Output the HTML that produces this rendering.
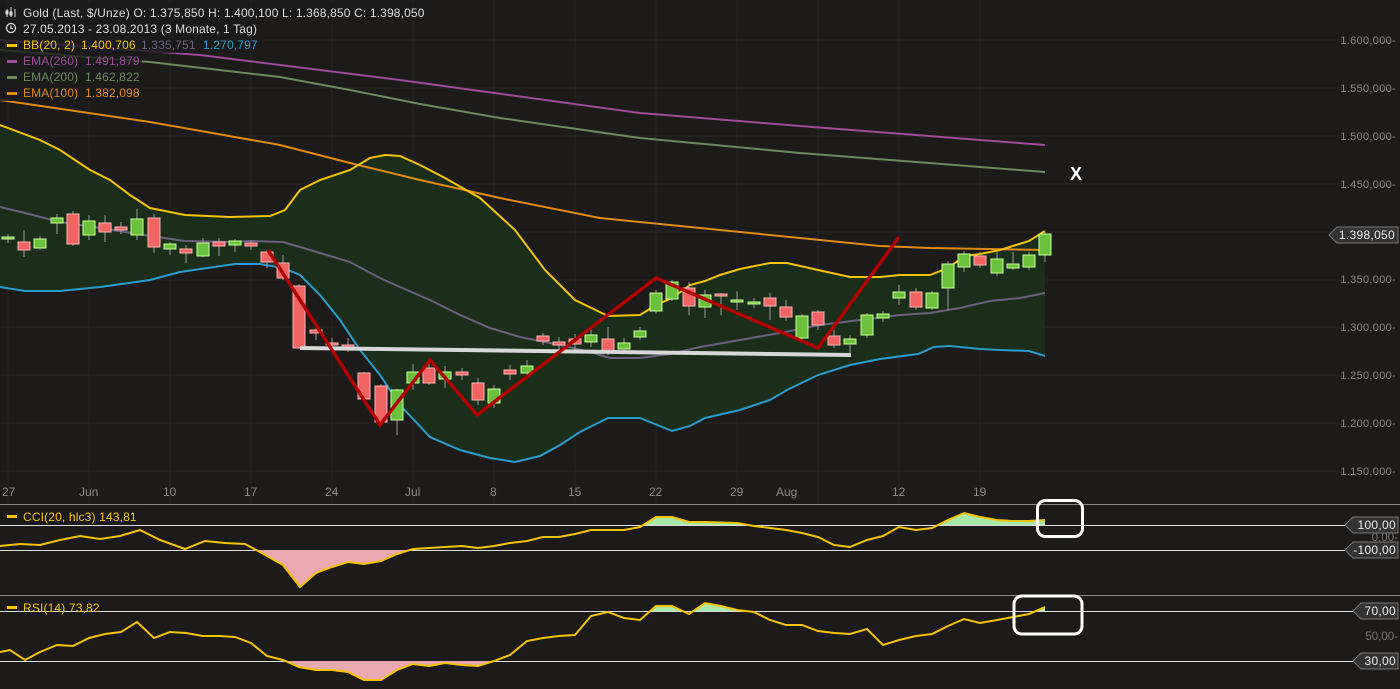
<!DOCTYPE html>
<html><head><meta charset="utf-8"><style>
html,body{margin:0;padding:0;background:#1c1b1a;width:1400px;height:689px;overflow:hidden}
svg{display:block}
text{font-family:"Liberation Sans",sans-serif}
.lg{font-size:12px;letter-spacing:0.15px}
</style></head><body>
<svg width="1400" height="689" viewBox="0 0 1400 689" xmlns="http://www.w3.org/2000/svg">
<rect width="1400" height="689" fill="#1c1b1a"/>
<defs>
<clipPath id="main"><rect x="0" y="0" width="1400" height="504"/></clipPath>
<clipPath id="cciUp"><rect x="0" y="500" width="1100" height="25"/></clipPath>
<clipPath id="cciDn"><rect x="0" y="550" width="1100" height="47"/></clipPath>
<clipPath id="rsiUp"><rect x="0" y="597" width="1100" height="14"/></clipPath>
<clipPath id="rsiDn"><rect x="0" y="661" width="1100" height="28"/></clipPath>
</defs>
<g stroke="#262524" stroke-width="1">
<line x1="0" y1="40" x2="1340" y2="40"/><line x1="0" y1="88" x2="1340" y2="88"/><line x1="0" y1="136" x2="1340" y2="136"/><line x1="0" y1="184" x2="1340" y2="184"/><line x1="0" y1="232" x2="1340" y2="232"/><line x1="0" y1="280" x2="1340" y2="280"/><line x1="0" y1="327" x2="1340" y2="327"/><line x1="0" y1="375" x2="1340" y2="375"/><line x1="0" y1="423" x2="1340" y2="423"/><line x1="0" y1="471" x2="1340" y2="471"/>
<line x1="8" y1="0" x2="8" y2="504"/><line x1="89" y1="0" x2="89" y2="504"/><line x1="170" y1="0" x2="170" y2="504"/><line x1="251" y1="0" x2="251" y2="504"/><line x1="332" y1="0" x2="332" y2="504"/><line x1="413" y1="0" x2="413" y2="504"/><line x1="494" y1="0" x2="494" y2="504"/><line x1="575" y1="0" x2="575" y2="504"/><line x1="656" y1="0" x2="656" y2="504"/><line x1="737" y1="0" x2="737" y2="504"/><line x1="818" y1="0" x2="818" y2="504"/><line x1="899" y1="0" x2="899" y2="504"/><line x1="980" y1="0" x2="980" y2="504"/>
</g>
<g clip-path="url(#main)">
<polygon fill="#1a2e1a" points="0,125 40,140 60,150 90,170 110,180 130,195 150,208 185,215 230,217 270,216 285,210 300,190 320,180 350,170 370,158 385,155 400,156 420,165 445,178 480,198 515,230 545,270 575,300 608,316 640,315 656,305 672,298 690,285 705,281 720,275 740,269 770,263 787,263 818,270 850,277 880,277 900,275 930,275 948,268 965,256 980,254 1000,250 1029,241 1045,231 1045,356 1029,351 1000,350 980,349 950,346 934,347 918,354 880,359 850,365 818,375 787,390 770,400 740,410 705,418 690,426 672,431 640,418 608,418 580,432 560,445 540,456 515,462 490,458 460,450 430,437 400,405 380,375 360,350 340,320 320,295 300,275 283,268 260,264 235,264 180,272 150,280 100,287 60,291 25,291 0,287"/>
<polyline fill="none" stroke="#a04a9a" stroke-width="2" points="0,40 200,55 400,80 640,113 800,126 1045,145"/>
<polyline fill="none" stroke="#6a8a5a" stroke-width="2" points="0,50 150,62 280,77 350,90 420,104 500,118 640,138 800,153 1045,172"/>
<polyline fill="none" stroke="#e08a10" stroke-width="2" points="0,100 150,122 280,145 350,163 420,180 500,198 600,218 700,228 800,238 880,246 930,248 1045,250"/>
<polyline fill="none" stroke="#f5c400" stroke-width="2" points="0,125 40,140 60,150 90,170 110,180 130,195 150,208 185,215 230,217 270,216 285,210 300,190 320,180 350,170 370,158 385,155 400,156 420,165 445,178 480,198 515,230 545,270 575,300 608,316 640,315 656,305 672,298 690,285 705,281 720,275 740,269 770,263 787,263 818,270 850,277 880,277 900,275 930,275 948,268 965,256 980,254 1000,250 1029,241 1045,231"/>
<polyline fill="none" stroke="#6a6080" stroke-width="2" points="0,207 25,213 60,222 100,228 150,236 185,241 230,242 250,241 283,242 300,247 320,253 350,262 380,278 400,287 430,300 460,315 490,328 520,337 560,345 590,352 610,358 640,358 670,354 700,347 740,340 780,333 820,325 860,320 900,315 930,313 960,308 990,301 1020,298 1045,293"/>
<polyline fill="none" stroke="#2a9ccc" stroke-width="2" points="0,287 25,291 60,291 100,287 150,280 180,272 235,264 260,264 283,268 300,275 320,295 340,320 360,350 380,375 400,405 430,437 460,450 490,458 515,462 540,456 560,445 580,432 608,418 640,418 672,431 690,426 705,418 740,410 770,400 787,390 818,375 850,365 880,359 918,354 934,347 950,346 980,349 1000,350 1029,351 1045,356"/>
<g stroke="#999" stroke-width="1">
<line x1="8" y1="234" x2="8" y2="243"/><line x1="24" y1="230" x2="24" y2="257"/><line x1="40" y1="236" x2="40" y2="250"/><line x1="57" y1="214" x2="57" y2="234"/><line x1="73" y1="211" x2="73" y2="246"/><line x1="89" y1="215" x2="89" y2="240"/><line x1="105" y1="215" x2="105" y2="242"/><line x1="121" y1="222" x2="121" y2="234"/><line x1="137" y1="209" x2="137" y2="240"/><line x1="154" y1="214" x2="154" y2="253"/><line x1="170" y1="242" x2="170" y2="255"/><line x1="186" y1="245" x2="186" y2="263"/><line x1="203" y1="238" x2="203" y2="257"/><line x1="219" y1="238" x2="219" y2="256"/><line x1="235" y1="239" x2="235" y2="252"/><line x1="251" y1="240" x2="251" y2="250"/><line x1="267" y1="250" x2="267" y2="268"/><line x1="283" y1="255" x2="283" y2="280"/><line x1="299" y1="284" x2="299" y2="348"/><line x1="316" y1="327" x2="316" y2="340"/><line x1="332" y1="338" x2="332" y2="346"/><line x1="348" y1="338" x2="348" y2="352"/><line x1="364" y1="372" x2="364" y2="400"/><line x1="381" y1="384" x2="381" y2="425"/><line x1="397" y1="389" x2="397" y2="435"/><line x1="413" y1="364" x2="413" y2="390"/><line x1="429" y1="360" x2="429" y2="385"/><line x1="445" y1="366" x2="445" y2="388"/><line x1="462" y1="368" x2="462" y2="380"/><line x1="478" y1="378" x2="478" y2="405"/><line x1="494" y1="385" x2="494" y2="408"/><line x1="510" y1="365" x2="510" y2="380"/><line x1="527" y1="360" x2="527" y2="378"/><line x1="543" y1="333" x2="543" y2="345"/><line x1="559" y1="337" x2="559" y2="350"/><line x1="575" y1="334" x2="575" y2="350"/><line x1="591" y1="330" x2="591" y2="347"/><line x1="608" y1="327" x2="608" y2="355"/><line x1="624" y1="338" x2="624" y2="352"/><line x1="640" y1="327" x2="640" y2="340"/><line x1="656" y1="290" x2="656" y2="314"/><line x1="672" y1="280" x2="672" y2="301"/><line x1="689" y1="282" x2="689" y2="315"/><line x1="705" y1="290" x2="705" y2="318"/><line x1="721" y1="293" x2="721" y2="315"/><line x1="737" y1="291" x2="737" y2="310"/><line x1="754" y1="298" x2="754" y2="308"/><line x1="770" y1="293" x2="770" y2="320"/><line x1="786" y1="300" x2="786" y2="321"/><line x1="802" y1="314" x2="802" y2="340"/><line x1="818" y1="310" x2="818" y2="330"/><line x1="834" y1="330" x2="834" y2="348"/><line x1="850" y1="335" x2="850" y2="354"/><line x1="867" y1="313" x2="867" y2="338"/><line x1="883" y1="311" x2="883" y2="322"/><line x1="899" y1="285" x2="899" y2="305"/><line x1="916" y1="288" x2="916" y2="310"/><line x1="932" y1="291" x2="932" y2="310"/><line x1="948" y1="261" x2="948" y2="310"/><line x1="964" y1="251" x2="964" y2="272"/><line x1="980" y1="252" x2="980" y2="268"/><line x1="997" y1="252" x2="997" y2="276"/><line x1="1013" y1="252" x2="1013" y2="270"/><line x1="1029" y1="252" x2="1029" y2="270"/><line x1="1045" y1="231" x2="1045" y2="262"/>
</g>
<g fill="#6cc13c" stroke="#c8ff98" stroke-width="1">
<rect x="2" y="237" width="12" height="2"/><rect x="34" y="239" width="12" height="9"/><rect x="51" y="218" width="12" height="5"/><rect x="83" y="221" width="12" height="14"/><rect x="131" y="219" width="12" height="16"/><rect x="164" y="244" width="12" height="5"/><rect x="197" y="243" width="12" height="13"/><rect x="229" y="241" width="12" height="4"/><rect x="391" y="390" width="12" height="30"/><rect x="407" y="372" width="12" height="11"/><rect x="439" y="372" width="12" height="7"/><rect x="488" y="389" width="12" height="14"/><rect x="521" y="366" width="12" height="7"/><rect x="585" y="335" width="12" height="7"/><rect x="618" y="343" width="12" height="6"/><rect x="634" y="331" width="12" height="6"/><rect x="650" y="293" width="12" height="18"/><rect x="666" y="282" width="12" height="17"/><rect x="699" y="295" width="12" height="12"/><rect x="731" y="300" width="12" height="2"/><rect x="748" y="302" width="12" height="2"/><rect x="796" y="316" width="12" height="22"/><rect x="844" y="339" width="12" height="5"/><rect x="861" y="315" width="12" height="20"/><rect x="877" y="314" width="12" height="4"/><rect x="893" y="292" width="12" height="6"/><rect x="926" y="293" width="12" height="15"/><rect x="942" y="264" width="12" height="24"/><rect x="958" y="254" width="12" height="13"/><rect x="991" y="259" width="12" height="14"/><rect x="1007" y="264" width="12" height="4"/><rect x="1023" y="255" width="12" height="12"/><rect x="1039" y="234" width="12" height="21"/>
</g>
<g fill="#f06464" stroke="#ffb4b4" stroke-width="1">
<rect x="18" y="242" width="12" height="8"/><rect x="67" y="214" width="12" height="30"/><rect x="99" y="223" width="12" height="9"/><rect x="115" y="227" width="12" height="3"/><rect x="148" y="218" width="12" height="29"/><rect x="180" y="249" width="12" height="4"/><rect x="213" y="242" width="12" height="4"/><rect x="245" y="243" width="12" height="3"/><rect x="261" y="252" width="12" height="10"/><rect x="277" y="263" width="12" height="15"/><rect x="293" y="286" width="12" height="62"/><rect x="310" y="330" width="12" height="3"/><rect x="326" y="343" width="12" height="2"/><rect x="342" y="345" width="12" height="5"/><rect x="358" y="373" width="12" height="26"/><rect x="375" y="386" width="12" height="36"/><rect x="423" y="368" width="12" height="15"/><rect x="456" y="372" width="12" height="3"/><rect x="472" y="383" width="12" height="17"/><rect x="504" y="370" width="12" height="4"/><rect x="537" y="336" width="12" height="5"/><rect x="553" y="342" width="12" height="3"/><rect x="569" y="339" width="12" height="5"/><rect x="602" y="339" width="12" height="12"/><rect x="683" y="288" width="12" height="18"/><rect x="715" y="294" width="12" height="2"/><rect x="764" y="298" width="12" height="8"/><rect x="780" y="307" width="12" height="10"/><rect x="812" y="312" width="12" height="13"/><rect x="828" y="336" width="12" height="9"/><rect x="910" y="292" width="12" height="15"/><rect x="974" y="256" width="12" height="9"/>
</g>
<line x1="300" y1="348" x2="851" y2="355" stroke="#d8d8d8" stroke-width="4"/>
<polyline fill="none" stroke="#b00000" stroke-width="3.5" points="268,250 380,425 430,360 477,415 656,278 818,348 899,237"/>
</g>
<text x="1070" y="180" fill="#fff" font-size="18" font-weight="bold">X</text>
<rect x="0" y="2" width="432" height="17" fill="#1a1a1a" opacity="0.8"/>
<rect x="0" y="20" width="258" height="16" fill="#1a1a1a" opacity="0.8"/>
<rect x="0" y="37" width="262" height="16" fill="#1a1a1a" opacity="0.8"/>
<rect x="0" y="53" width="142" height="16" fill="#1a1a1a" opacity="0.8"/>
<rect x="0" y="69" width="142" height="16" fill="#1a1a1a" opacity="0.8"/>
<rect x="0" y="85" width="142" height="16" fill="#1a1a1a" opacity="0.8"/>
<g class="lg">
<g stroke="#ddd" stroke-width="1"><line x1="7" y1="9" x2="7" y2="17"/><line x1="11" y1="7" x2="11" y2="17"/><line x1="15" y1="9" x2="15" y2="17"/><rect x="6" y="11" width="2" height="3" fill="#ddd"/><rect x="10" y="12" width="2" height="3" fill="#ddd"/></g>
<text x="23" y="17" fill="#ddd">Gold (Last, $/Unze)  O: 1.375,850  H: 1.400,100  L: 1.368,850  C: 1.398,050</text>
<circle cx="11" cy="28" r="4.5" fill="none" stroke="#ddd" stroke-width="1.3"/><path d="M11 25.5V28.5H13" fill="none" stroke="#ddd" stroke-width="1.2"/>
<text x="23" y="33" fill="#ddd">27.05.2013 - 23.08.2013 (3 Monate, 1 Tag)</text>
<rect x="7" y="44" width="10" height="3" fill="#f5c400"/><text x="23" y="49" fill="#f5c400">BB(20, 2)</text><text x="81" y="49" fill="#f5c400">1.400,706</text><text x="141" y="49" fill="#6a6080">1.335,751</text><text x="203" y="49" fill="#2a9ccc">1.270,797</text>
<rect x="7" y="60" width="10" height="3" fill="#a04a9a"/><text x="23" y="65" fill="#a04a9a">EMA(260)</text><text x="85" y="65" fill="#a04a9a">1.491,879</text>
<rect x="7" y="76" width="10" height="3" fill="#6a8a5a"/><text x="23" y="81" fill="#6a8a5a">EMA(200)</text><text x="85" y="81" fill="#6a8a5a">1.462,822</text>
<rect x="7" y="92" width="10" height="3" fill="#e08a10"/><text x="23" y="97" fill="#e08a10">EMA(100)</text><text x="85" y="97" fill="#e08a10">1.382,098</text>
</g>
<g font-size="11" fill="#8a8a8a" text-anchor="end" letter-spacing="0.3">
<text x="1396" y="44">1.600,000-</text><text x="1396" y="92">1.550,000-</text><text x="1396" y="140">1.500,000-</text><text x="1396" y="188">1.450,000-</text><text x="1396" y="283">1.350,000-</text><text x="1396" y="331">1.300,000-</text><text x="1396" y="379">1.250,000-</text><text x="1396" y="427">1.200,000-</text><text x="1396" y="475">1.150,000-</text>
</g>
<g fill="#8a8a8a" font-size="12">
<text x="2" y="496">27</text><text x="79" y="496">Jun</text><text x="163" y="496">10</text><text x="244" y="496">17</text><text x="325" y="496">24</text><text x="405" y="496">Jul</text><text x="490" y="496">8</text><text x="568" y="496">15</text><text x="649" y="496">22</text><text x="730" y="496">29</text><text x="776" y="496">Aug</text><text x="892" y="496">12</text><text x="973" y="496">19</text>
</g>
<g fill="#333" stroke="#777" stroke-width="1">
<path d="M1337 227H1398V243H1337L1329 235Z"/>
<path d="M1353 517H1398V533H1353L1345 525Z"/>
<path d="M1353 542H1398V558H1353L1345 550Z"/>
<path d="M1361 603H1398V619H1361L1353 611Z"/>
<path d="M1361 653H1398V669H1361L1353 661Z"/>
</g>
<g fill="#eee" font-size="12" text-anchor="end" letter-spacing="0.3">
<text x="1395" y="239">1.398,050</text><text x="1396" y="529">100,00</text><text x="1396" y="554">-100,00</text><text x="1396" y="615">70,00</text><text x="1396" y="665">30,00</text>
</g>
<g fill="#777" font-size="11.5" text-anchor="end"><text x="1398" y="541">0,00-</text><text x="1398" y="640">50,00-</text></g>
<line x1="0" y1="504.5" x2="1400" y2="504.5" stroke="#888"/>
<line x1="0" y1="525.5" x2="1345" y2="525.5" stroke="#ddd"/>
<line x1="0" y1="550.5" x2="1345" y2="550.5" stroke="#ddd"/>
<line x1="0" y1="595.5" x2="1400" y2="595.5" stroke="#888"/>
<line x1="0" y1="611.5" x2="1353" y2="611.5" stroke="#ddd"/>
<line x1="0" y1="661.5" x2="1353" y2="661.5" stroke="#ddd"/>
<g clip-path="url(#cciUp)"><polygon fill="#a8e8a8" points="0,525 0,546 20,544 40,545 60,540 80,536 100,539 120,536 140,530 160,540 185,549 205,541 225,543 245,544 260,552 283,565 300,587 316,573 332,567 348,562 364,564 381,561 397,554 413,549 445,547 462,546 478,548 494,546 510,543 527,541 543,537 559,537 575,534 591,530 608,530 624,530 640,527 656,517 672,517 689,522 705,522 737,523 754,526 770,528 786,530 802,533 818,537 834,545 850,547 867,540 883,536 899,527 916,530 932,528 948,520 964,513 980,517 997,520 1013,521 1029,521 1045,520 1045,525"/></g>
<g clip-path="url(#cciDn)"><polygon fill="#eaa8b0" points="0,550 0,546 20,544 40,545 60,540 80,536 100,539 120,536 140,530 160,540 185,549 205,541 225,543 245,544 260,552 283,565 300,587 316,573 332,567 348,562 364,564 381,561 397,554 413,549 445,547 462,546 478,548 494,546 1045,550"/></g>
<polyline fill="none" stroke="#f5c400" stroke-width="2" points="0,546 20,544 40,545 60,540 80,536 100,539 120,536 140,530 160,540 185,549 205,541 225,543 245,544 260,552 283,565 300,587 316,573 332,567 348,562 364,564 381,561 397,554 413,549 445,547 462,546 478,548 494,546 510,543 527,541 543,537 559,537 575,534 591,530 608,530 624,530 640,527 656,517 672,517 689,522 705,522 737,523 754,526 770,528 786,530 802,533 818,537 834,545 850,547 867,540 883,536 899,527 916,530 932,528 948,520 964,513 980,517 997,520 1013,521 1029,521 1045,520"/>
<rect x="0" y="509" width="142" height="15" fill="#1a1a1a" opacity="0.8"/>
<rect x="7" y="515" width="10" height="3" fill="#f5c400"/><text class="lg" x="23" y="521" fill="#f5c400">CCI(20, hlc3)  143,81</text>
<g clip-path="url(#rsiUp)"><polygon fill="#a8e8a8" points="0,611 591,611 591,616 608,612 624,618 640,620 656,606 672,606 689,614 705,603 721,606 737,610 754,612 770,620 1029,614 1045,607 1045,611"/></g>
<g clip-path="url(#rsiDn)"><polygon fill="#eaa8b0" points="0,661 0,652 10,650 25,660 40,652 57,645 73,646 89,638 105,634 121,632 137,622 154,638 170,632 186,633 203,636 219,636 235,637 251,643 267,656 283,660 299,667 316,670 332,670 348,672 364,680 381,680 397,670 413,664 429,666 445,663 462,665 478,666 494,661 510,655 600,661"/></g>
<polyline fill="none" stroke="#f5c400" stroke-width="2" points="0,652 10,650 25,660 40,652 57,645 73,646 89,638 105,634 121,632 137,622 154,638 170,632 186,633 203,636 219,636 235,637 251,643 267,656 283,660 299,667 316,670 332,670 348,672 364,680 381,680 397,670 413,664 429,666 445,663 462,665 478,666 494,661 510,655 527,641 543,638 559,636 575,635 591,616 608,612 624,618 640,620 656,606 672,606 689,614 705,603 721,606 737,610 754,612 770,620 786,625 802,625 818,631 834,633 850,634 867,629 883,645 899,640 916,636 932,634 948,626 964,619 980,623 997,620 1013,617 1029,614 1045,607"/>
<rect x="7" y="606" width="10" height="3" fill="#f5c400"/><text class="lg" x="23" y="612" fill="#f5c400">RSI(14)  73,82</text>
<rect x="1037.5" y="500.5" width="45" height="36" rx="8" fill="none" stroke="#fff" stroke-width="3"/>
<rect x="1014" y="596" width="68" height="38" rx="8" fill="none" stroke="#fff" stroke-width="3"/>
</svg>
</body></html>
